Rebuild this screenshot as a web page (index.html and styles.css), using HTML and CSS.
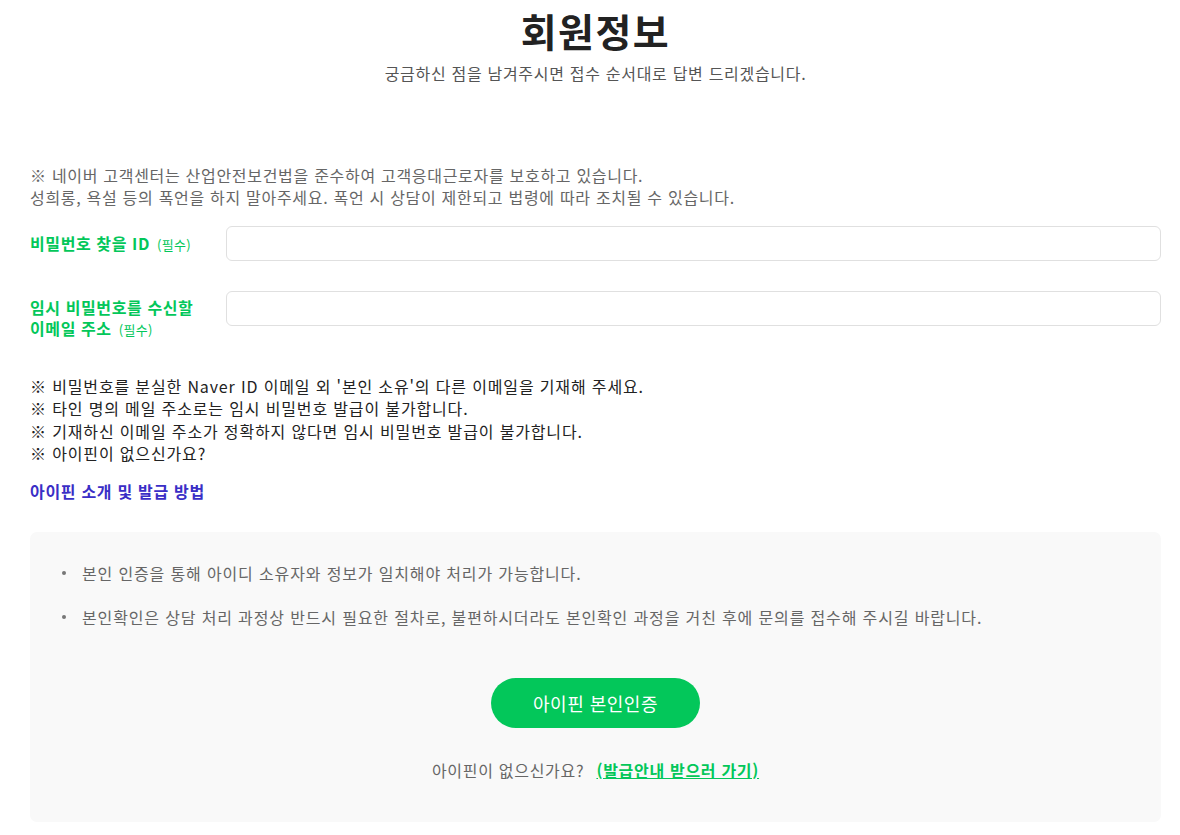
FILE: index.html
```html
<!DOCTYPE html>
<html lang="ko">
<head>
<meta charset="utf-8">
<title>회원정보</title>
<link rel="stylesheet" href="styles.css">
</head>
<body>
<div class="page">
  <header class="head">
    <h1 class="title">회원정보</h1>
    <p class="subtitle">궁금하신 점을 남겨주시면 접수 순서대로 답변 드리겠습니다.</p>
  </header>

  <p class="notice">※ 네이버 고객센터는 산업안전보건법을 준수하여 고객응대근로자를 보호하고 있습니다.<br>성희롱, 욕설 등의 폭언을 하지 말아주세요. 폭언 시 상담이 제한되고 법령에 따라 조치될 수 있습니다.</p>

  <div class="row row-first">
    <label class="label">비밀번호 찾을 ID <span class="req">(필수)</span></label>
    <input class="field" type="text">
  </div>
  <div class="row row-second">
    <label class="label">임시 비밀번호를 수신할<br>이메일 주소 <span class="req">(필수)</span></label>
    <input class="field" type="text">
  </div>

  <p class="notes">※ 비밀번호를 분실한 Naver ID 이메일 외 '본인 소유'의 다른 이메일을 기재해 주세요.<br>※ 타인 명의 메일 주소로는 임시 비밀번호 발급이 불가합니다.<br>※ 기재하신 이메일 주소가 정확하지 않다면 임시 비밀번호 발급이 불가합니다.<br>※ 아이핀이 없으신가요?</p>

  <a class="ipin-link" href="#">아이핀 소개 및 발급 방법</a>

  <section class="box">
    <ul class="bullets">
      <li>본인 인증을 통해 아이디 소유자와 정보가 일치해야 처리가 가능합니다.</li>
      <li>본인확인은 상담 처리 과정상 반드시 필요한 절차로, 불편하시더라도 본인확인 과정을 거친 후에 문의를 접수해 주시길 바랍니다.</li>
    </ul>
    <div class="btn-wrap"><button class="btn" type="button">아이핀 본인인증</button></div>
    <p class="noipin">아이핀이 없으신가요? <a class="guide" href="#">(발급안내 받으러 가기)</a></p>
  </section>
</div>
</body>
</html>
```

FILE: styles.css
```css
* { box-sizing: border-box; }
html, body { margin: 0; padding: 0; background: #fff; }
body {
  font-family: "Noto Sans CJK KR", "Noto Sans", "Liberation Sans", sans-serif;
  color: #222;
  font-size: 16px;
  letter-spacing: 0.7px;
}
.page {
  margin: 0 19px 0 30px;
  padding-top: 2px;
}
.head { text-align: center; }
.title {
  margin: 0;
  font-size: 39px;
  line-height: 56px;
  font-weight: 700;
  letter-spacing: 1.5px;
  color: #222;
}
.subtitle {
  margin: 4px 0 0;
  font-size: 16px;
  line-height: 22px;
  color: #555;
}
.notice {
  margin: 80px 0 0;
  line-height: 22px;
  color: #666;
}
.row {
  display: flex;
  align-items: center;
}
.row-first { margin-top: 18px; }
.row-second { margin-top: 30px; align-items: flex-start; }
.label {
  width: 196px;
  flex: none;
  font-size: 16px;
  font-weight: 700;
  color: #03c75a;
  line-height: 21px;
  letter-spacing: 0.6px;
}
.row-second .label { padding-top: 6px; }
.req {
  font-size: 13px;
  font-weight: 400;
  margin-left: 2px;
  letter-spacing: 0.3px;
}
.field {
  flex: 1;
  height: 35px;
  border: 1px solid #e0e0e0;
  border-radius: 6px;
  background: #fff;
  outline: none;
  font: inherit;
  padding: 0 12px;
}
.notes {
  margin: 35px 0 0;
  line-height: 22.4px;
  letter-spacing: 0.85px;
  color: #222;
}
.ipin-link {
  display: block;
  width: fit-content;
  margin-top: 15px;
  font-weight: 700;
  color: #3a2ec6;
  text-decoration: none;
  line-height: 22px;
}
.box {
  margin-top: 30px;
  background: #f9f9f9;
  border-radius: 7px;
  padding: 30px 32px 41px;
}
.bullets {
  margin: 0;
  padding: 0 0 0 20px;
  list-style: none;
}
.bullets li {
  position: relative;
  line-height: 22px;
  letter-spacing: 0.85px;
  color: #666;
  margin-bottom: 22px;
}
.bullets li:last-child { margin-bottom: 0; }
.bullets li::before {
  content: "";
  position: absolute;
  left: -20px;
  top: 9px;
  width: 4px;
  height: 4px;
  border-radius: 50%;
  background: #777;
}
.btn-wrap {
  display: flex;
  justify-content: center;
  margin-top: 50px;
}
.btn {
  width: 209px;
  height: 50px;
  border: 0;
  border-radius: 25px;
  background: #03c75a;
  color: #fff;
  font-family: inherit;
  font-size: 18px;
  letter-spacing: 0.5px;
  cursor: pointer;
}
.noipin {
  margin: 31px 0 0;
  text-align: center;
  line-height: 22px;
  color: #666;
}
.guide {
  margin-left: 7px;
  color: #03c75a;
  font-weight: 700;
  text-decoration: underline;
}
```
